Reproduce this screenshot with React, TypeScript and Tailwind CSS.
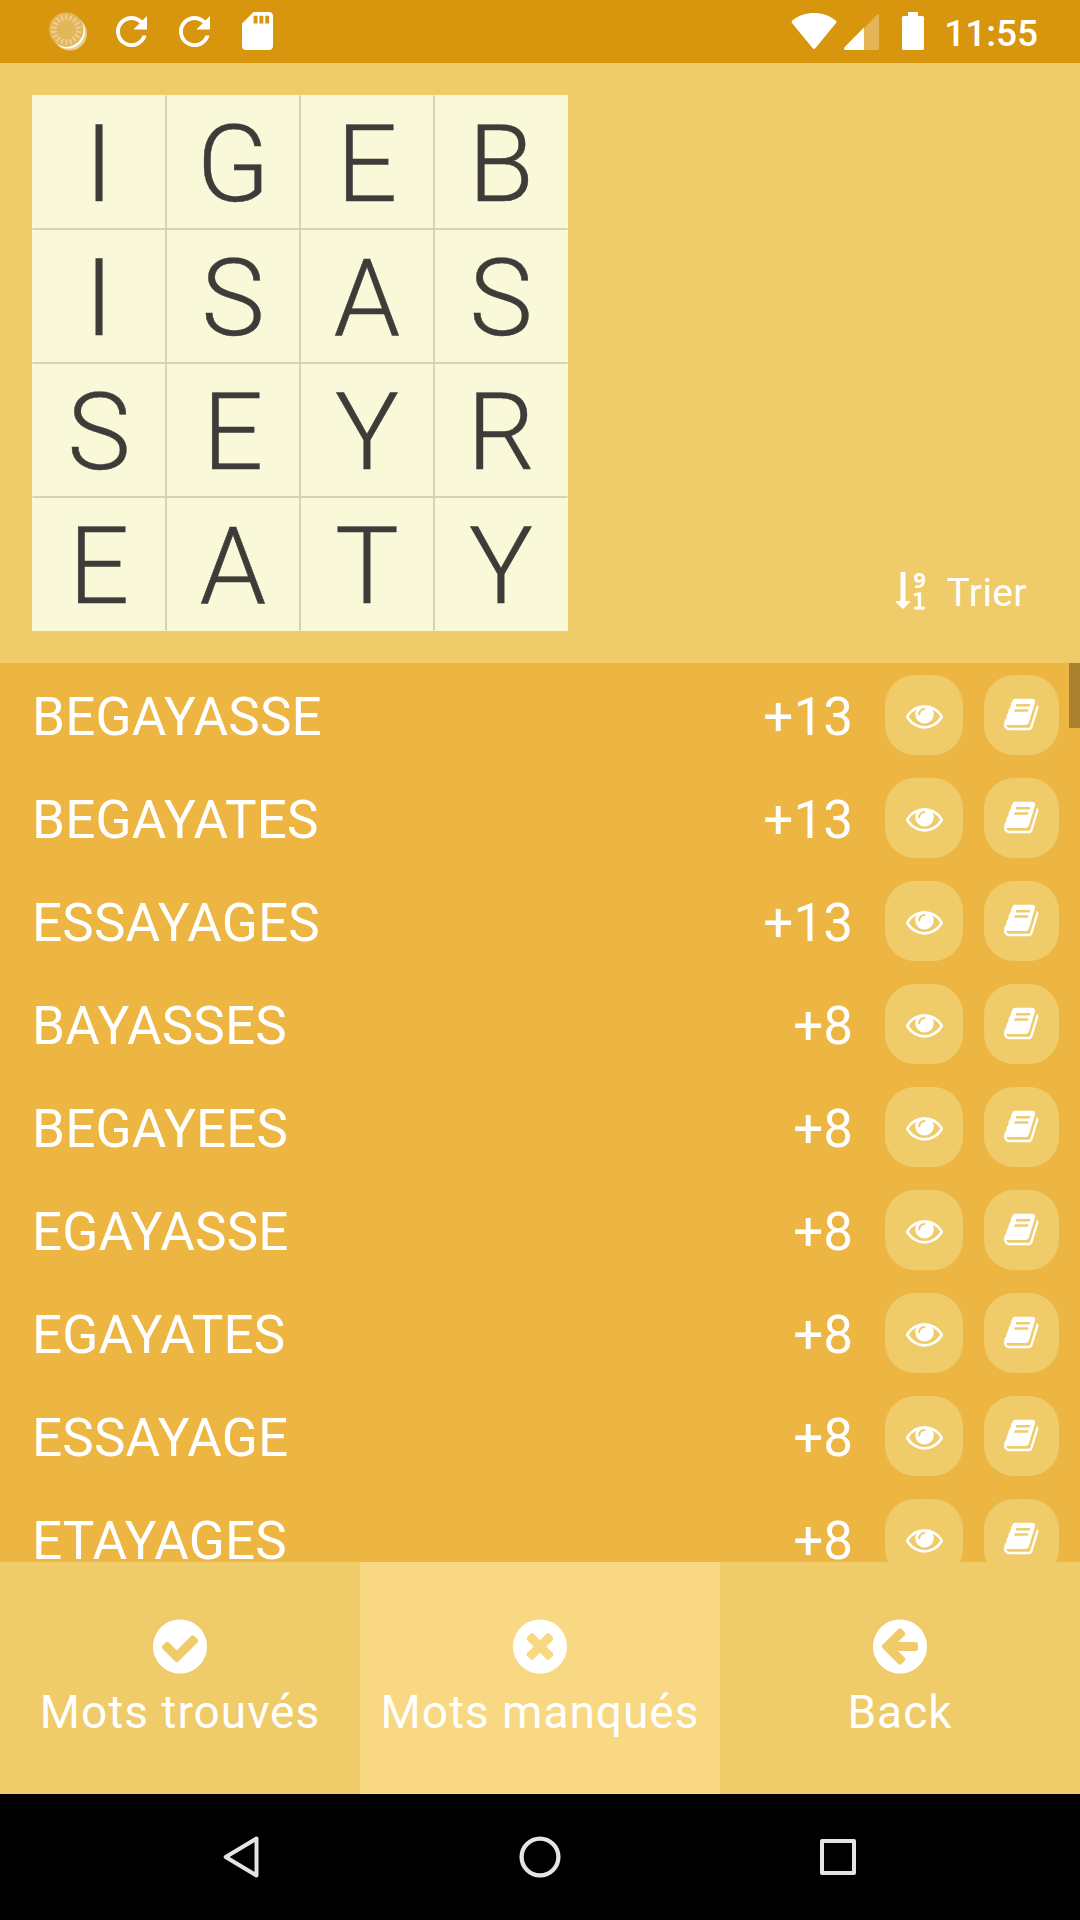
import React from "react";

const LETTERS = "IGEBISASSEYREATY".split("");

const WORDS: [string, number][] = [
  ["BEGAYASSE", 13],
  ["BEGAYATES", 13],
  ["ESSAYAGES", 13],
  ["BAYASSES", 8],
  ["BEGAYEES", 8],
  ["EGAYASSE", 8],
  ["EGAYATES", 8],
  ["ESSAYAGE", 8],
  ["ETAYAGES", 8],
];

const DISC =
  "M1664 896q0 209-103 385.5t-279.5 279.5-385.5 103-385.5-103-279.5-279.5-103-385.5 103-385.5 279.5-279.5 385.5-103 385.5 103 279.5 279.5 103 385.5z";
const CHECK =
  "M1412 734q0-28-18-46l-91-90q-19-19-45-19t-45 19l-408 407-226-226q-19-19-45-19t-45 19l-91 90q-18 18-18 46 0 27 18 45l362 362q19 19 45 19 27 0 46-19l543-543q18-18 18-45z";
const CROSS =
  "M1277 1122q0-26-19-45l-181-181 181-181q19-19 19-45 0-27-19-46l-90-90q-19-19-46-19-26 0-45 19l-181 181-181-181q-19-19-45-19-27 0-46 19l-90 90q-19 19-19 46 0 26 19 45l181 181-181 181q-19 19-19 45 0 27 19 46l90 90q19 19 46 19 26 0 45-19l181-181 181 181q19 19 45 19 27 0 46-19l90-90q19-19 19-46z";
const ARROW_LEFT =
  "M1408 960v-128q0-26-19-45t-45-19h-502l189-189q19-19 19-45t-19-45l-91-91q-18-18-45-18t-45 18l-362 362-91 91q-18 18-18 45t18 45l91 91 362 362q18 18 45 18t45-18l91-91q18-18 18-45t-18-45l-189-189h502q26 0 45-19t19-45z";

function Eye() {
  return (
    <svg viewBox="0 0 1792 1792" className="size-[37px]" fill="currentColor">
      <path d="M1664 960q-152-236-381-353 61 104 61 225 0 185-131.5 316.5t-316.5 131.5-316.5-131.5-131.5-316.5q0-121 61-225-229 117-381 353 133 205 333.5 326.5t434.5 121.5 434.5-121.5 333.5-326.5zm-720-384q0-20-14-34t-34-14q-125 0-214.5 89.5t-89.5 214.5q0 20 14 34t34 14 34-14 14-34q0-86 61-147t147-61q20 0 34-14t14-34zm848 384q0 34-20 69-140 230-376.5 368.5t-499.5 138.5-499.5-139-376.5-368q-20-35-20-69t20-69q140-229 376.5-368t499.5-139 499.5 139 376.5 368q20 35 20 69z" />
    </svg>
  );
}

function Book() {
  return (
    <svg viewBox="0 0 1792 1792" className="mb-[1px] ml-[2px] size-[37px]" fill="currentColor">
      <path d="M1639 478q40 57 18 129l-275 906q-19 64-76.5 107.5t-122.5 43.5h-923q-77 0-148.5-53.5t-99.5-131.5q-24-67-2-127 0-4 3-27t4-37q1-8-3-21.5t-3-19.5q2-11 8-21t16.5-23.5 16.5-23.5q23-38 45-91.5t30-91.5q3-10 .5-30t-.5-28q3-11 17-28t17-23q21-36 42-92t25-90q1-9-2.5-32t.5-28q4-13 22-30.5t22-22.5q19-26 42.5-84.5t27.5-96.5q1-8-3-25.5t-2-26.5q2-8 9-18t18-23 17-21q8-12 16.5-30.5t15-35 16-36 19.5-32 26.5-23.5 36-11.5 47.5 5.5l-1 3q38-9 51-9h761q74 0 114 56t18 130l-274 906q-36 119-71.5 153.5t-128.5 34.5h-869q-27 0-38 15-11 16-1 43 24 70 144 70h923q29 0 56-15.5t35-41.5l300-987q7-22 5-57 38 15 59 43zm-1064 2q-4 13 2 22.5t20 9.5h608q13 0 25.5-9.5t16.5-22.5l21-64q4-13-2-22.5t-20-9.5h-608q-13 0-25.5 9.5t-16.5 22.5zm-83 256q-4 13 2 22.5t20 9.5h608q13 0 25.5-9.5t16.5-22.5l21-64q4-13-2-22.5t-20-9.5h-608q-13 0-25.5 9.5t-16.5 22.5z" />
    </svg>
  );
}

function Refresh() {
  return (
    <svg viewBox="4 4 16 16" className="h-[31px] w-[31px]" fill="currentColor">
      <path d="M17.65 6.35C16.2 4.9 14.21 4 12 4c-4.42 0-7.99 3.58-7.99 8s3.57 8 7.99 8c3.73 0 6.84-2.55 7.73-6h-2.08c-.82 2.33-3.04 4-5.65 4-3.31 0-6-2.69-6-6s2.69-6 6-6c1.66 0 3.14.69 4.22 1.78L13 11h7V4l-2.35 2.35z" />
    </svg>
  );
}

const TICKS = Array.from({ length: 18 }, (_, i) => i * 20);

function StatusBar() {
  return (
    <header className="flex h-[63px] items-start bg-[#d8960f] pr-[42px] pl-[49px] text-white">
      <svg viewBox="0 0 38 40" className="mt-[11px] h-10 w-[38px]">
        <circle cx="21" cy="22.5" r="17" fill="#fff" opacity="0.5" />
        <circle cx="19" cy="20.5" r="17" fill="#fff" />
        <circle cx="17.3" cy="18.7" r="17.2" fill="#e3b65a" />
        {TICKS.map((a) => (
          <path key={a} d="M17.3 3.4v5.6" stroke="#edcf92" strokeWidth="2" transform={`rotate(${a} 17.3 18.7)`} />
        ))}
      </svg>
      <div className="mt-4 ml-[29px]"><Refresh /></div>
      <div className="mt-4 ml-8"><Refresh /></div>
      <svg viewBox="4 2 16 20" preserveAspectRatio="none" className="mt-[12px] ml-8 h-[38px] w-[31px]" fill="currentColor">
        <path d="M18 2h-8L4.02 8 4 20c0 1.1.9 2 2 2h12c1.1 0 2-.9 2-2V4c0-1.1-.9-2-2-2zm-6 6h-2V4h2v4zm3 0h-2V4h2v4zm3 0h-2V4h2v4z" />
      </svg>
      <svg viewBox="0 0 46 37" className="mt-[13px] ml-auto h-[37px] w-[46px]" fill="currentColor">
        <path d="M1.2 10.2Q-.2 8.500 1.700 7.200C8 2.300 15 0 23 0s15 2.300 21.300 7.200q1.900 1.300.5 3L24.300 35.200q-1.300 1.500-2.600 0z" />
      </svg>
      <svg viewBox="0 0 35 36" className="mt-[14px] ml-[7px] h-9 w-[35px]" fill="currentColor">
        <path d="M20 14.200 33 .700Q35-.5 35 2v32q0 2-2 2H20z" opacity="0.3" />
        <path d="M20 13.400V36H2Q-1 36 .7 33z" />
      </svg>
      <svg viewBox="0 0 22 38" className="mt-3 ml-[23px] h-[38px] w-[22px]" fill="currentColor">
        <path d="M6 0h10v4h4.500q1.500 0 1.500 1.500v31q0 1.500-1.500 1.500h-19Q0 38 0 36.500v-31Q0 4 1.500 4H6z" />
      </svg>
      <span className="ml-[20px] text-[37px] leading-[67px] font-medium">11:55</span>
    </header>
  );
}

function SortIcon() {
  return (
    <svg viewBox="0 0 32 40" className="h-10 w-8 overflow-visible" fill="#fff">
      <path d="M5.500 1.500Q5.500 1 6 1h4q.5 0 .5.5V30h4.200q.8 0 .3.900L8.500 37.600q-.5.500-1 0L.6 30.900q-.5-.9.400-.9h4.500z" />
      <text x="18.500" y="16.800" fontFamily="Open Sans" fontWeight="700" fontSize="21.500">9</text>
      <text x="17.200" y="38" fontFamily="DejaVu Sans" fontSize="22" stroke="#fff" strokeWidth="0.900">1</text>
    </svg>
  );
}

function Tab({ icon, label, active }: { icon: string; label: string; active?: boolean }) {
  return (
    <button
      className={
        active
          ? "flex flex-1 flex-col items-center bg-[#f8d882] pt-[57px]"
          : "flex flex-1 flex-col items-center bg-[#efcb6a] pt-[57px]"
      }
    >
      <svg viewBox="128 128 1536 1536" className="h-[55px] w-[54px]">
        <path d={DISC} fill="#fff" />
        <path d={icon} fill={active ? "#f8d882" : "#efcb6a"} />
      </svg>
      <span className="mt-[11px] text-[46px] leading-[54px] tracking-[1px] whitespace-nowrap">{label}</span>
    </button>
  );
}

function Cell({ letter, index }: { letter: string; index: number }) {
  const col = index % 4;
  const row = Math.floor(index / 4);
  return (
    <div
      className={[
        "h-[134px] border bg-[#f9f8d8] text-center text-[107px] leading-[137px] font-light text-[#3f3b39] [-webkit-text-stroke:0.4px_#3f3b39]",
        col === 0 ? "border-l-transparent" : "border-l-[#403c3a]/20",
        col === 3 ? "border-r-transparent" : "border-r-[#403c3a]/20",
        row === 0 ? "border-t-transparent" : "border-t-[#403c3a]/20",
        row === 3 ? "border-b-transparent" : "border-b-[#403c3a]/20",
      ].join(" ")}
    >
      {letter}
    </div>
  );
}

export default function App() {
  return (
    <div className="flex h-[1920px] w-[1080px] flex-col overflow-hidden bg-[#efcb6a] font-['Roboto',sans-serif] text-white">
      <StatusBar />
      <section className="flex h-[600px] justify-between p-8">
        <div className="grid size-[536px] grid-cols-4">
          {LETTERS.map((l, i) => (
            <Cell key={i} letter={l} index={i} />
          ))}
        </div>
        <button className="mr-[21px] flex items-start self-end pb-[15px]">
          <SortIcon />
          <span className="ml-[20px] text-[39px] leading-[45px] tracking-[0.4px]">Trier</span>
        </button>
      </section>
      <main className="relative h-[899px] overflow-hidden bg-[#edb541]">
        {WORDS.map(([word, points]) => (
          <div key={word} className="flex h-[103px] items-start pr-[21px] pl-8 text-[53px] leading-[109px]">
            <span className="flex-1 tracking-[0.15px]">{word}</span>
            <span className="mr-8">+{points}</span>
            <button className="mt-3 mr-[21px] flex h-20 w-[78px] items-center justify-center rounded-[30px] bg-[#efcb6a]">
              <Eye />
            </button>
            <button className="mt-3 flex h-20 w-[75px] items-center justify-center rounded-[30px] bg-[#efcb6a]">
              <Book />
            </button>
          </div>
        ))}
        <div className="absolute top-0 right-0 h-[65px] w-[11px] bg-[#aa822f]" />
      </main>
      <nav className="flex h-[232px]">
        <Tab icon={CHECK} label="Mots trouvés" />
        <Tab icon={CROSS} label="Mots manqués" active />
        <Tab icon={ARROW_LEFT} label="Back" />
      </nav>
      <footer className="flex h-[126px] items-center justify-between bg-black pr-[223px] pl-[222px]">
        <svg viewBox="0 0 38 42" className="h-[42px] w-[38px]" fill="none" stroke="#e4e4e4" strokeWidth="4" strokeLinejoin="round">
          <path d="M34.500 2.500v37L3.700 21z" />
        </svg>
        <svg viewBox="0 0 42 42" className="h-[42px] w-[42px]" fill="none" stroke="#e4e4e4" strokeWidth="4.300">
          <circle cx="21" cy="21" r="18.400" />
        </svg>
        <svg viewBox="0 0 38 38" className="h-[38px] w-[38px]" fill="none" stroke="#e4e4e4" strokeWidth="4" strokeLinejoin="round">
          <path d="M3 3h32v32H3z" />
        </svg>
      </footer>
    </div>
  );
}
